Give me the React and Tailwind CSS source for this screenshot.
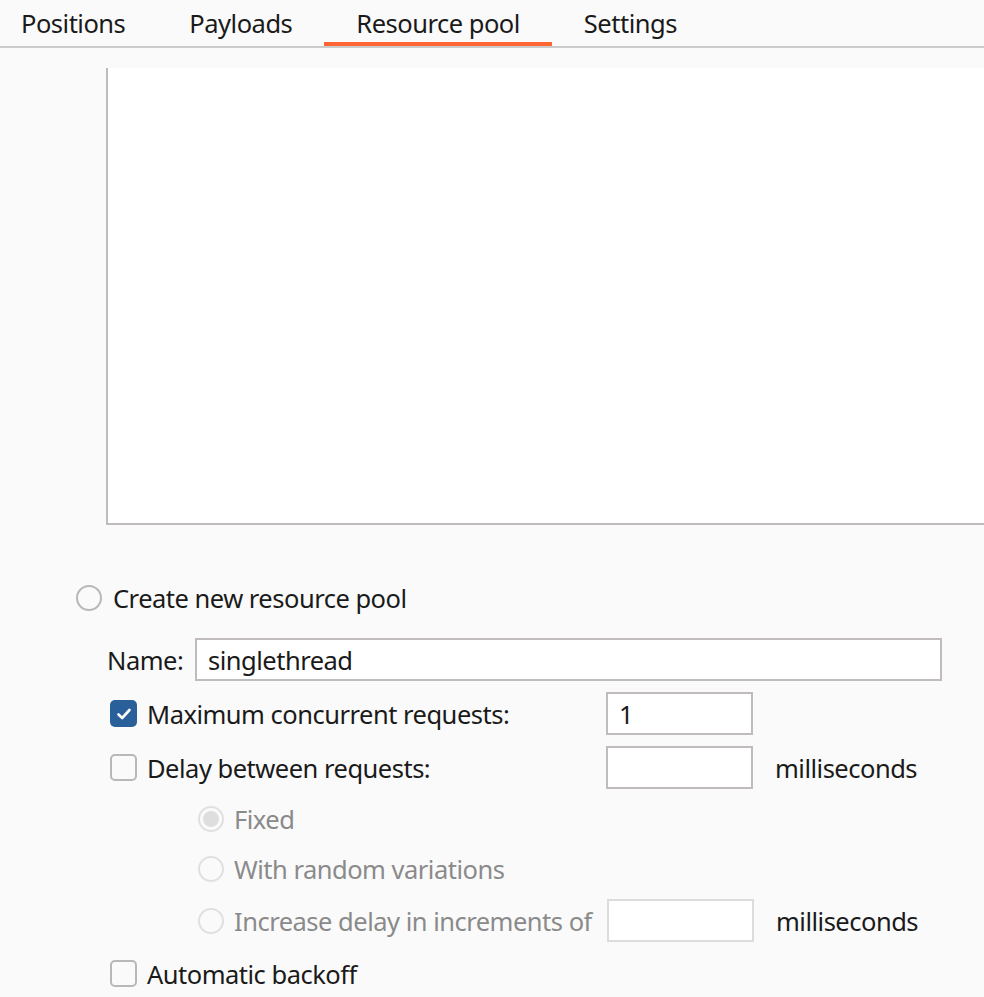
import React from 'react';

const font = { fontFamily: '"Noto Sans", "Open Sans", sans-serif' };

const txt = 'text-[25.5px] tracking-[-0.5px] leading-none pt-[2px]';

// Aba do topo; a ativa recebe o sublinhado laranja
const Tab = ({ label, active }) => (
  <div className="relative h-full flex items-center px-[32px]">
    <span className={`${txt} text-[#1a1a1a]`}>{label}</span>
    {active && <div className="absolute left-0 right-0 bottom-0 h-[4px] bg-[#ff6633]" />}
  </div>
);

const Radio = ({ checked, disabled }) => (
  <div
    className={`w-[26px] h-[26px] rounded-full border-2 flex items-center justify-center shrink-0 ${
      disabled ? 'border-[#e0e0e0] bg-[#fafafa]' : 'border-[#b8b8b8] bg-[#fafafa]'
    }`}
  >
    {checked && <div className="w-[16px] h-[16px] rounded-full bg-[#dedede]" />}
  </div>
);

const Checkbox = ({ checked }) =>
  checked ? (
    <div className="w-[27px] h-[27px] rounded-[5px] bg-[#2a6099] flex items-center justify-center shrink-0">
      <svg width="18" height="18" viewBox="0 0 18 18" fill="none">
        <path d="M3.5 9.5 L7.2 13 L14.5 5" stroke="white" strokeWidth="2.6" strokeLinecap="round" strokeLinejoin="round" />
      </svg>
    </div>
  ) : (
    <div className="w-[27px] h-[27px] rounded-[5px] border-2 border-[#b8b8b8] bg-[#fafafa] shrink-0" />
  );

const Field = ({ value, disabled, className = '' }) => (
  <div
    className={`h-[43px] bg-white border-2 flex items-center px-[11px] ${txt} text-[#1a1a1a] ${
      disabled ? 'border-[#dcdcdc]' : 'border-[#c0bcbc]'
    } ${className}`}
  >
    {value}
  </div>
);

export default function App() {
  return (
    <div className="w-[984px] h-[997px] bg-[#fafafa] overflow-hidden" style={font}>
      {/* Barra de abas */}
      <div className="h-[48px] flex border-b-2 border-[#c9cccb] -ml-[11px]">
        <Tab label="Positions" />
        <Tab label="Payloads" />
        <Tab label="Resource pool" active />
        <Tab label="Settings" />
      </div>

      {/* Tabela (vazia) com pools existentes */}
      <div className="mt-[20px] ml-[106px] h-[457px] bg-white border-l-2 border-b-2 border-[#c0bcbc]" />

      {/* Criar novo pool */}
      <div className="mt-[60px] ml-[76px] flex items-center gap-[11px] h-[26px]">
        <Radio />
        <span className={`${txt} text-[#1a1a1a]`}>Create new resource pool</span>
      </div>

      <div className="mt-[27px] ml-[107px] flex items-center h-[43px]">
        <span className={`${txt} text-[#1a1a1a] w-[88px]`}>Name:</span>
        <Field value="singlethread" className="w-[747px]" />
      </div>

      <div className="mt-[11px] ml-[110px] flex items-center h-[43px]">
        <Checkbox checked />
        <span className={`${txt} ml-[10px] w-[459px] text-[#1a1a1a]`}>Maximum concurrent requests:</span>
        <Field value="1" className="w-[147px]" />
      </div>

      <div className="mt-[11px] ml-[110px] flex items-center h-[43px]">
        <Checkbox />
        <span className={`${txt} ml-[10px] w-[459px] text-[#1a1a1a]`}>Delay between requests:</span>
        <Field className="w-[147px]" />
        <span className={`${txt} ml-[22px] text-[#1a1a1a]`}>milliseconds</span>
      </div>

      {/* Opções de atraso (desabilitadas) */}
      <div className="mt-[17px] ml-[198px] flex items-center gap-[10px] h-[26px]">
        <Radio checked disabled />
        <span className={`${txt} text-[#8a8a8a]`}>Fixed</span>
      </div>
      <div className="mt-[24px] ml-[198px] flex items-center gap-[10px] h-[26px]">
        <Radio disabled />
        <span className={`${txt} text-[#8a8a8a]`}>With random variations</span>
      </div>
      <div className="mt-[17px] ml-[198px] flex items-center h-[43px]">
        <Radio disabled />
        <span className={`${txt} ml-[10px] w-[373px] text-[#8a8a8a]`}>Increase delay in increments of</span>
        <Field disabled className="w-[147px]" />
        <span className={`${txt} ml-[22px] text-[#1a1a1a]`}>milliseconds</span>
      </div>

      <div className="mt-[18px] ml-[110px] flex items-center h-[27px]">
        <Checkbox />
        <span className={`${txt} ml-[10px] text-[#1a1a1a]`}>Automatic backoff</span>
      </div>
    </div>
  );
}
